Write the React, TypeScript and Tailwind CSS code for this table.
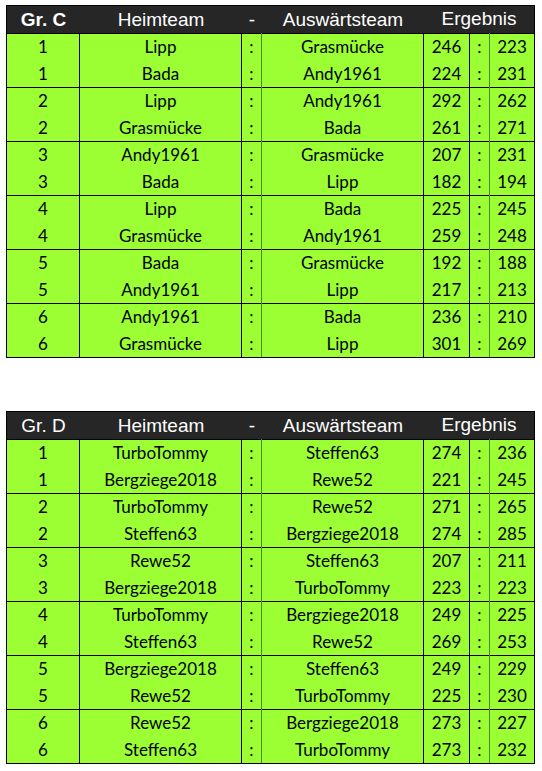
import React from "react";

type Match = [string, string, string, string, string];

const groupC: Match[][] = [
  [["1", "Lipp", "Grasmücke", "246", "223"], ["1", "Bada", "Andy1961", "224", "231"]],
  [["2", "Lipp", "Andy1961", "292", "262"], ["2", "Grasmücke", "Bada", "261", "271"]],
  [["3", "Andy1961", "Grasmücke", "207", "231"], ["3", "Bada", "Lipp", "182", "194"]],
  [["4", "Lipp", "Bada", "225", "245"], ["4", "Grasmücke", "Andy1961", "259", "248"]],
  [["5", "Bada", "Grasmücke", "192", "188"], ["5", "Andy1961", "Lipp", "217", "213"]],
  [["6", "Andy1961", "Bada", "236", "210"], ["6", "Grasmücke", "Lipp", "301", "269"]],
];

const groupD: Match[][] = [
  [["1", "TurboTommy", "Steffen63", "274", "236"], ["1", "Bergziege2018", "Rewe52", "221", "245"]],
  [["2", "TurboTommy", "Rewe52", "271", "265"], ["2", "Steffen63", "Bergziege2018", "274", "285"]],
  [["3", "Rewe52", "Steffen63", "207", "211"], ["3", "Bergziege2018", "TurboTommy", "223", "223"]],
  [["4", "TurboTommy", "Bergziege2018", "249", "225"], ["4", "Steffen63", "Rewe52", "269", "253"]],
  [["5", "Bergziege2018", "Steffen63", "249", "229"], ["5", "Rewe52", "TurboTommy", "225", "230"]],
  [["6", "Rewe52", "Bergziege2018", "273", "227"], ["6", "Steffen63", "TurboTommy", "273", "232"]],
];

function Row({ m }: { m: Match }) {
  return (
    <div className="flex h-[27px] items-center text-[17px] leading-none text-black">
      <div className="flex h-full w-[73px] items-center justify-center border-r border-black">{m[0]}</div>
      <div className="flex h-full w-[162px] items-center justify-center border-r border-black">{m[1]}</div>
      <div className="flex h-full w-[20px] items-center justify-center border-r border-[#4d8a1e]">:</div>
      <div className="flex h-full w-[162px] items-center justify-center border-r border-black">{m[2]}</div>
      <div className="flex h-full w-[46px] items-center justify-center border-r border-black">{m[3]}</div>
      <div className="flex h-full w-[20px] items-center justify-center border-r border-[#4d8a1e]">:</div>
      <div className="flex h-full flex-1 items-center justify-center">{m[4]}</div>
    </div>
  );
}

function Table({ label, bold, pairs }: { label: string; bold: boolean; pairs: Match[][] }) {
  return (
    <div className="w-[529px] border border-black bg-[#9bff33] [font-family:Lato,'Open_Sans',sans-serif]">
      <div className="flex h-[27px] items-center bg-[#262626] text-[19px] leading-none text-white [font-family:'Liberation_Sans',Arial,sans-serif]">
        <div className={`flex w-[73px] justify-center ${bold ? "font-bold" : ""}`}>{label}</div>
        <div className="flex w-[162px] justify-center">Heimteam</div>
        <div className="flex w-[20px] justify-center">-</div>
        <div className="flex w-[162px] justify-center">Auswärtsteam</div>
        <div className="flex flex-1 justify-center pb-[3px]">Ergebnis</div>
      </div>
      {pairs.map((p, i) => (
        <div key={i} className="flex h-[54px] flex-col border-t border-black">
          <div className="-mt-px">
            <Row m={p[0]} />
          </div>
          <Row m={p[1]} />
        </div>
      ))}
    </div>
  );
}

export default function App() {
  return (
    <div className="min-h-[771px] w-[542px] bg-white pl-[6px] pt-[5px]">
      <Table label="Gr. C" bold={true} pairs={groupC} />
      <div className="h-[53px]" />
      <Table label="Gr. D" bold={false} pairs={groupD} />
    </div>
  );
}
